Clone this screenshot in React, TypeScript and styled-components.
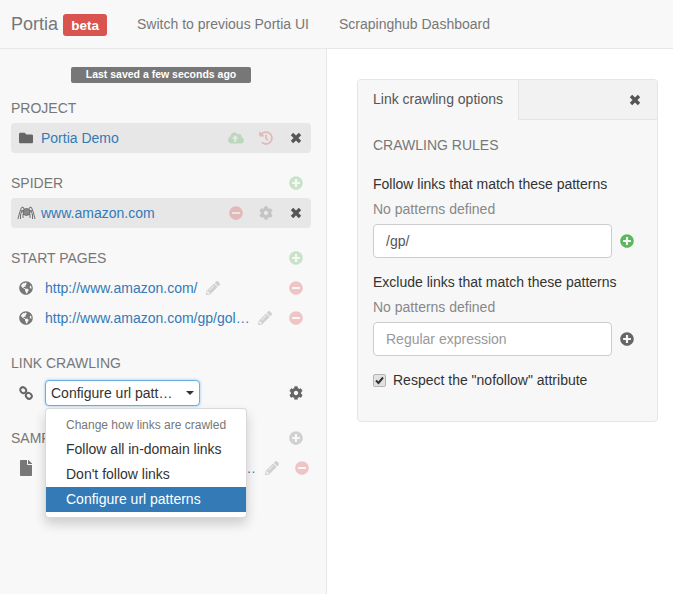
import React from "react";
import styled, { createGlobalStyle } from "styled-components";
import {
  FaCloudUploadAlt,
  FaCog,
  FaFile,
  FaFolder,
  FaGlobeAmericas,
  FaHistory,
  FaMinusCircle,
  FaPencilAlt,
  FaPlusCircle,
} from "react-icons/fa";

const Global = createGlobalStyle`
  html, body, #root { height: 100%; margin: 0; }
  body {
    font-family: "Liberation Sans", Arial, sans-serif;
    font-size: 14px;
    line-height: 20px;
    color: #333;
    background: #fff;
    overflow: hidden;
  }
  * { box-sizing: border-box; }
`;

const Page = styled.div`
  display: flex;
  flex-direction: column;
  height: 100%;
`;

const Navbar = styled.header`
  flex: 0 0 49px;
  display: flex;
  align-items: center;
  padding: 0 0 1px 11px;
  background: #f8f8f8;
  border-bottom: 1px solid #e7e7e7;
`;

const Brand = styled.span`
  font-size: 18px;
  color: #777;
`;

const Beta = styled.span`
  margin: 2px 0 0 5px;
  width: 44px;
  height: 22px;
  border-radius: 3px;
  background: #d9534f;
  color: #fff;
  font-size: 13.5px;
  font-weight: bold;
  line-height: 23px;
  text-align: center;
`;

const NavLink = styled.a`
  color: #777;
  margin-left: ${(p: { $gap: number }) => p.$gap}px;
`;

const Main = styled.div`
  flex: 1;
  display: flex;
  min-height: 0;
`;

const Sidebar = styled.aside`
  position: relative;
  flex: 0 0 327px;
  min-width: 0;
  padding: 18px 15px 0 11px;
  background: #f8f8f8;
  border-right: 1px solid #e7e7e7;
`;

const SavedPill = styled.div`
  width: 180px;
  height: 16px;
  margin: 0 0 10px 60px;
  border-radius: 2px;
  background: #777;
  color: #fff;
  font-size: 10.5px;
  font-weight: bold;
  line-height: 15px;
  text-align: center;
`;

const Section = styled.section`
  margin-bottom: 15px;
`;

const Heading = styled.div`
  display: flex;
  align-items: center;
  justify-content: space-between;
  height: 30px;
  color: #777;
`;

const Row = styled.div<{ $filled?: boolean }>`
  display: flex;
  align-items: center;
  height: 30px;
  border-radius: 4px;
  background: ${(p) => (p.$filled ? "#e7e7e7" : "transparent")};
`;

const Slot = styled.span<{ $color?: string; $faded?: boolean; $size?: number }>`
  flex: 0 0 30px;
  display: flex;
  align-items: center;
  justify-content: center;
  height: 30px;
  font-size: ${(p) => p.$size ?? 14}px;
  color: ${(p) => p.$color ?? "#666"};
  opacity: ${(p) => (p.$faded ? 0.3 : 1)};
`;

const Spacer = styled.span`
  flex: 1;
`;

const Name = styled.a`
  color: #337ab7;
`;

const Url = styled.a<{ $width?: number }>`
  margin-left: 4px;
  color: #337ab7;
  white-space: nowrap;
  overflow: hidden;
  text-overflow: ellipsis;
  ${(p) => (p.$width ? `flex: 0 0 ${p.$width}px;` : "")}
`;

const Select = styled.div`
  display: flex;
  align-items: center;
  justify-content: space-between;
  width: 155px;
  height: 26px;
  margin-left: 4px;
  padding: 0 5px 1px 5px;
  border: 1px solid #66afe9;
  border-radius: 4px;
  background: #fff;
  box-shadow: 0 0 3px rgba(102, 175, 233, 0.7);
  color: #333;
`;

const SelectLabel = styled.span`
  white-space: nowrap;
`;

const Caret = styled.span`
  width: 0;
  height: 0;
  margin-top: 1px;
  border-top: 4px solid #333;
  border-left: 4px solid transparent;
  border-right: 4px solid transparent;
`;

const Menu = styled.div`
  position: absolute;
  left: 45px;
  top: 359px;
  width: 202px;
  padding: 5px 0;
  background: #fff;
  border: 1px solid rgba(0, 0, 0, 0.15);
  border-radius: 4px;
  box-shadow: 0 6px 12px rgba(0, 0, 0, 0.175);
  z-index: 5;
`;

const MenuHeader = styled.div`
  height: 23px;
  padding-left: 20px;
  font-size: 12px;
  line-height: 23px;
  color: #777;
`;

const MenuItem = styled.div<{ $active?: boolean }>`
  height: 25px;
  padding-left: 20px;
  line-height: 25px;
  color: ${(p) => (p.$active ? "#fff" : "#333")};
  background: ${(p) => (p.$active ? "#337ab7" : "transparent")};
`;

const Content = styled.main`
  flex: 1;
  padding: 30px 15px 0 30px;
`;

const Panel = styled.div`
  width: 301px;
  height: 343px;
  background: #f7f7f7;
  border: 1px solid #e5e5e5;
  border-radius: 4px;
  overflow: hidden;
`;

const TabBar = styled.div`
  display: flex;
  height: 40px;
  background: #f2f2f2;
  border-bottom: 1px solid #e5e5e5;
`;

const Tab = styled.div`
  width: 161px;
  height: 40px;
  padding: 9px 0 0 15px;
  background: #f7f7f7;
  border-right: 1px solid #e5e5e5;
  color: #555;
`;

const TabClose = styled.span`
  margin-left: auto;
  flex: 0 0 45px;
  display: flex;
  align-items: center;
  justify-content: center;
`;

const PanelBody = styled.div`
  padding: 15px 15px 0;
`;

const SubTitle = styled.div`
  color: #777;
  margin-bottom: 19px;
`;

const FieldLabel = styled.div`
  color: #333;
  height: 20px;
`;

const Hint = styled.div`
  color: #888;
  margin-top: 5px;
  height: 20px;
`;

const InputRow = styled.div`
  display: flex;
  align-items: center;
  margin: 5px 0 14px;
`;

const TextInput = styled.input`
  width: 239px;
  height: 34px;
  padding: 0 12px;
  border: 1px solid #ccc;
  border-radius: 4px;
  background: #fff;
  color: #555;
  font: inherit;
  outline: none;
  &::placeholder { color: #999; opacity: 1; }
`;

const AddIcon = styled.span<{ $color: string }>`
  display: flex;
  margin-left: 8px;
  font-size: 14px;
  color: ${(p) => p.$color};
`;

const CheckRow = styled.label`
  display: flex;
  align-items: center;
  height: 20px;
  color: #333;
`;

const CheckBox = styled.span`
  flex: 0 0 13px;
  width: 13px;
  height: 13px;
  margin-right: 7px;
  border: 1px solid #b5b5b5;
  border-radius: 2px;
  background: #e2e2e2;
  display: flex;
  align-items: center;
  justify-content: center;
`;

const SpiderIcon = () => (
  <svg width="19" height="14" viewBox="0 0 19 14" fill="none" stroke="#6e6e6e" strokeWidth="1">
    <ellipse cx="9.5" cy="6" rx="3.6" ry="3.4" fill="#888" />
    <path d="M7 3 L6 1 L4.5 1.5 L2.5 7 L1 13" />
    <path d="M12 3 L13 1 L14.5 1.5 L16.5 7 L18 13" />
    <path d="M6.5 6 L5 4 L3.5 9 L3.5 13" />
    <path d="M12.5 6 L14 4 L15.5 9 L15.5 13" />
    <path d="M7 9 L6 8 L6 12 M12 9 L13 8 L13 12" />
  </svg>
);

const ChainIcon = () => (
  <svg width="14" height="14" viewBox="0 0 14 14" fill="none" stroke="#666" strokeWidth="2">
    <ellipse cx="4.2" cy="4.2" rx="3.1" ry="2.7" transform="rotate(45 4.2 4.2)" />
    <ellipse cx="9.8" cy="9.8" rx="3.1" ry="2.7" transform="rotate(45 9.8 9.8)" />
  </svg>
);

const CloseIcon = () => (
  <svg width="12" height="12" viewBox="0 0 12 12" fill="none" stroke="#555" strokeWidth="3.4">
    <path d="M2 2 L10 10 M10 2 L2 10" />
  </svg>
);

const GREEN = "#5cb85c";
const RED = "#d9534f";

export default function App() {
  return (
    <Page>
      <Global />
      <Navbar>
        <Brand>Portia</Brand>
        <Beta>beta</Beta>
        <NavLink $gap={30}>Switch to previous Portia UI</NavLink>
        <NavLink $gap={30}>Scrapinghub Dashboard</NavLink>
      </Navbar>
      <Main>
        <Sidebar>
          <SavedPill>Last saved a few seconds ago</SavedPill>

          <Section>
            <Heading>PROJECT</Heading>
            <Row $filled>
              <Slot><FaFolder /></Slot>
              <Name>Portia Demo</Name>
              <Spacer />
              <Slot $color={GREEN} $faded $size={16}><FaCloudUploadAlt /></Slot>
              <Slot $color={RED} $faded><FaHistory /></Slot>
              <Slot><CloseIcon /></Slot>
            </Row>
          </Section>

          <Section>
            <Heading>
              SPIDER
              <Slot $color={GREEN} $faded><FaPlusCircle /></Slot>
            </Heading>
            <Row $filled>
              <Slot><SpiderIcon /></Slot>
              <Name>www.amazon.com</Name>
              <Spacer />
              <Slot $color={RED} $faded><FaMinusCircle /></Slot>
              <Slot $color="#777" $faded><FaCog /></Slot>
              <Slot><CloseIcon /></Slot>
            </Row>
          </Section>

          <Section>
            <Heading>
              START PAGES
              <Slot $color={GREEN} $faded><FaPlusCircle /></Slot>
            </Heading>
            <Row>
              <Slot $color="#777"><FaGlobeAmericas /></Slot>
              <Url>http://www.amazon.com/</Url>
              <Slot $color="#777" $faded><FaPencilAlt /></Slot>
              <Spacer />
              <Slot $color={RED} $faded><FaMinusCircle /></Slot>
            </Row>
            <Row>
              <Slot $color="#777"><FaGlobeAmericas /></Slot>
              <Url $width={205}>http://www.amazon.com/gp/goldbox/</Url>
              <Slot $color="#777" $faded><FaPencilAlt /></Slot>
              <Spacer />
              <Slot $color={RED} $faded><FaMinusCircle /></Slot>
            </Row>
          </Section>

          <Section>
            <Heading>LINK CRAWLING</Heading>
            <Row>
              <Slot><ChainIcon /></Slot>
              <Select>
                <SelectLabel>Configure url patt…</SelectLabel>
                <Caret />
              </Select>
              <Spacer />
              <Slot><FaCog /></Slot>
            </Row>
          </Section>

          <Section>
            <Heading>
              SAMPLES
              <Slot $color="#777" $faded><FaPlusCircle /></Slot>
            </Heading>
            <Row>
              <Slot $color="#777" $size={16}><FaFile /></Slot>
              <Url $width={212}>www.amazon.com/gp/goldbox/sample</Url>
              <Slot $color="#777" $faded><FaPencilAlt /></Slot>
              <Slot $color={RED} $faded><FaMinusCircle /></Slot>
            </Row>
          </Section>

          <Menu>
            <MenuHeader>Change how links are crawled</MenuHeader>
            <MenuItem>Follow all in-domain links</MenuItem>
            <MenuItem>Don't follow links</MenuItem>
            <MenuItem $active>Configure url patterns</MenuItem>
          </Menu>
        </Sidebar>

        <Content>
          <Panel>
            <TabBar>
              <Tab>Link crawling options</Tab>
              <TabClose><CloseIcon /></TabClose>
            </TabBar>
            <PanelBody>
              <SubTitle>CRAWLING RULES</SubTitle>
              <FieldLabel>Follow links that match these patterns</FieldLabel>
              <Hint>No patterns defined</Hint>
              <InputRow>
                <TextInput readOnly value="/gp/" />
                <AddIcon $color={GREEN}><FaPlusCircle /></AddIcon>
              </InputRow>
              <FieldLabel>Exclude links that match these patterns</FieldLabel>
              <Hint>No patterns defined</Hint>
              <InputRow>
                <TextInput readOnly placeholder="Regular expression" />
                <AddIcon $color="#666"><FaPlusCircle /></AddIcon>
              </InputRow>
              <CheckRow>
                <CheckBox>
                  <svg width="9" height="9" viewBox="0 0 9 9" fill="none" stroke="#333" strokeWidth="2">
                    <path d="M1 4.5 L3.5 7 L8 1.5" />
                  </svg>
                </CheckBox>
                Respect the "nofollow" attribute
              </CheckRow>
            </PanelBody>
          </Panel>
        </Content>
      </Main>
    </Page>
  );
}
